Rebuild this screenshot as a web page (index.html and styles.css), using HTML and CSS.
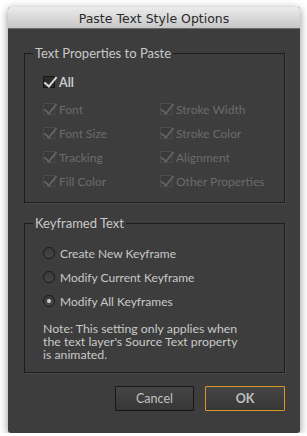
FILE: index.html
```html
<!DOCTYPE html>
<html lang="en">
<head>
  <meta charset="UTF-8">
  <title>Paste Text Style Options</title>
  <link rel="stylesheet" href="styles.css">
</head>
<body>
  <div class="window">
    <div class="titlebar">Paste Text Style Options</div>

    <div class="content">
      <fieldset class="group">
        <legend>Text Properties to Paste</legend>
        <label class="check all">
          <span class="box"></span>
          All
        </label>
        <div class="check-grid">
          <label class="check disabled"><span class="box"></span>Font</label>
          <label class="check disabled"><span class="box"></span>Stroke Width</label>
          <label class="check disabled"><span class="box"></span>Font Size</label>
          <label class="check disabled"><span class="box"></span>Stroke Color</label>
          <label class="check disabled"><span class="box"></span>Tracking</label>
          <label class="check disabled"><span class="box"></span>Alignment</label>
          <label class="check disabled"><span class="box"></span>Fill Color</label>
          <label class="check disabled"><span class="box"></span>Other Properties</label>
        </div>
      </fieldset>

      <fieldset class="group keyframed">
        <legend>Keyframed Text</legend>
        <label class="radio"><span class="dot"></span>Create New Keyframe</label>
        <label class="radio"><span class="dot"></span>Modify Current Keyframe</label>
        <label class="radio selected"><span class="dot"></span>Modify All Keyframes</label>
        <p class="note">Note: This setting only applies when the text layer's Source Text property is animated.</p>
      </fieldset>

      <div class="buttons">
        <button class="btn">Cancel</button>
        <button class="btn default">OK</button>
      </div>
    </div>
  </div>
</body>
</html>
```

FILE: styles.css
```css
* {
  margin: 0;
  padding: 0;
  box-sizing: border-box;
}

body {
  background: #fff;
  font-family: Lato, "Liberation Sans", sans-serif;
  font-size: 12px;
  color: #c9c9c9;
}

.window {
  margin: 7px 0 0 8px;
  width: 292px;
  height: 426px;
  background: #3d3d3d;
  border-radius: 3px;
  box-shadow: 0 2px 8px rgba(0, 0, 0, 0.45);
  overflow: hidden;
}

.titlebar {
  height: 22px;
  line-height: 23px;
  text-align: center;
  font-family: "DejaVu Sans", sans-serif;
  font-size: 12.5px;
  color: #2a2a2a;
  background: linear-gradient(to bottom, #ececec, #c6c6c6);
  border-bottom: 1px solid #6a6a6a;
}

.content {
  padding: 16px 15px 0 16px;
}

.group {
  border: 1px solid #1c1c1c;
  box-shadow: 1px 1px 0 #4a4a4a;
  padding: 9px 0 0 18px;
  height: 158px;
}

.group legend {
  margin-left: -10px;
  padding: 0 2px;
  color: #c9c9c9;
  font-size: 13px;
  line-height: 16px;
}

.check {
  display: flex;
  align-items: center;
  height: 24px;
}

.check .box {
  position: relative;
  width: 12px;
  height: 12px;
  margin-right: 4px;
  border: 1px solid #151515;
  background: #2b2b2b;
}

.check .box::after {
  content: "";
  position: absolute;
  left: 3px;
  top: -3px;
  width: 5px;
  height: 11px;
  border-right: 2px solid #d8d8d8;
  border-bottom: 2px solid #d8d8d8;
  transform: rotate(40deg);
}

.check.disabled {
  color: #6b6b6b;
}

.check.disabled .box {
  border-color: #4b4b4b;
  background: #3a3a3a;
}

.check.disabled .box::after {
  border-color: #626262;
}

.all {
  font-weight: bold;
  font-size: 12.5px;
  margin-bottom: 3px;
}

.check-grid {
  display: grid;
  grid-template-columns: 117px 1fr;
}

.group.keyframed {
  margin-top: 12px;
  height: auto;
  padding: 10px 0 11px 18px;
}

.radio {
  display: flex;
  align-items: center;
  height: 24px;
}

.radio .dot {
  position: relative;
  width: 12px;
  height: 12px;
  margin-right: 5px;
  border-radius: 50%;
  border: 1px solid #1a1a1a;
  background: linear-gradient(to bottom, #3a3a3a, #474747);
}

.radio.selected .dot::after {
  content: "";
  position: absolute;
  left: 3px;
  top: 3px;
  width: 4px;
  height: 4px;
  border-radius: 50%;
  background: #cfcfcf;
}

.note {
  margin-top: 9px;
  width: 205px;
  font-size: 12.3px;
  line-height: 13px;
}

.buttons {
  display: flex;
  justify-content: flex-end;
  gap: 11px;
  margin-top: 13px;
}

.btn {
  width: 79px;
  height: 25px;
  font-family: Lato, "Liberation Sans", sans-serif;
  font-size: 12.5px;
  color: #c0c0c0;
  background: linear-gradient(to bottom, #454545, #373737);
  border: 1px solid #161616;
  border-radius: 1px;
}

.btn.default {
  width: 80px;
  border-color: #d8962a;
  font-weight: bold;
}
```
